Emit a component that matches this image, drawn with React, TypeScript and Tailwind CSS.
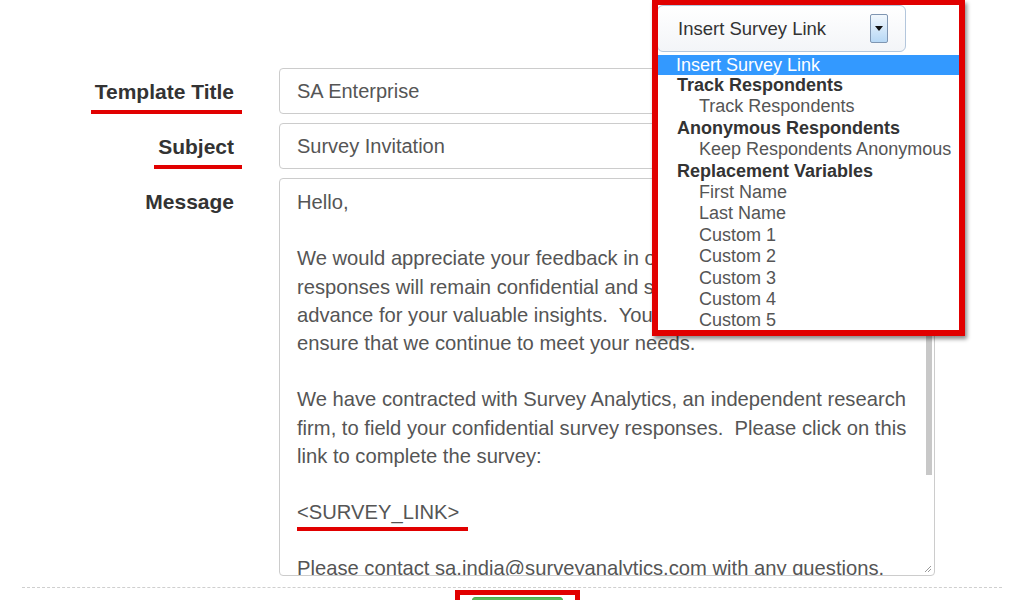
import { ReactNode } from 'react';

const font = { fontFamily: '"Liberation Sans", Arial, sans-serif' };

const messageLines: ReactNode[] = [
  'Hello,',
  '',
  'We would appreciate your feedback in our survey.  Your',
  'responses will remain confidential and secure.  Thank you in',
  'advance for your valuable insights.  Your feedback will help us',
  'ensure that we continue to meet your needs.',
  '',
  'We have contracted with Survey Analytics, an independent research',
  'firm, to field your confidential survey responses.  Please click on this',
  'link to complete the survey:',
  '',
  <span key="link" className="border-b-4 border-[#e10000] pb-[4px] pr-[9px]">{'<SURVEY_LINK>'}</span>,
  '',
  'Please contact sa.india@surveyanalytics.com with any questions.',
];

type Opt = { label: string; kind: 'selected' | 'group' | 'item' };

const options: Opt[] = [
  { label: 'Insert Survey Link', kind: 'selected' },
  { label: 'Track Respondents', kind: 'group' },
  { label: 'Track Respondents', kind: 'item' },
  { label: 'Anonymous Respondents', kind: 'group' },
  { label: 'Keep Respondents Anonymous', kind: 'item' },
  { label: 'Replacement Variables', kind: 'group' },
  { label: 'First Name', kind: 'item' },
  { label: 'Last Name', kind: 'item' },
  { label: 'Custom 1', kind: 'item' },
  { label: 'Custom 2', kind: 'item' },
  { label: 'Custom 3', kind: 'item' },
  { label: 'Custom 4', kind: 'item' },
  { label: 'Custom 5', kind: 'item' },
];

function Label({ children, underline }: { children: ReactNode; underline?: boolean }) {
  return (
    <div className="flex justify-end">
      <span
        className={`text-[21px] font-bold text-[#333] leading-[24px] ${
          underline ? 'border-b-[4px] border-[#e10000] pl-[4px] pr-[8px] -mr-[8px] pb-[3px] mt-[12px]' : 'mt-[12px]'
        }`}
      >
        {children}
      </span>
    </div>
  );
}

function SurveyLinkDropdown() {
  return (
    <div className="absolute left-[652px] top-0 w-[313px] h-[336px] border-[6px] border-t-[5px] border-[#e10000] bg-white overflow-hidden shadow-[2px_3px_4px_rgba(0,0,0,0.45)]">
      <div className="flex items-center justify-between w-[249px] h-[47px] -ml-[1px] border border-[#b3c6dc] rounded-[6px] bg-gradient-to-b from-white to-[#f3f5f8] pl-[20px] pr-[17px]">
        <span className="text-[18.5px] text-[#333]">Insert Survey Link</span>
        <div className="flex items-center justify-center w-[18px] h-[29px] border border-[#7f96b2] rounded-[2px] bg-gradient-to-b from-[#f2f8fd] to-[#b7d8f5]">
          <svg width="8" height="5" viewBox="0 0 8 5">
            <path d="M0 0 L8 0 L4 5 Z" fill="#111" />
          </svg>
        </div>
      </div>
      <ul className="mt-[3px] text-[18px]">
        {options.map((o, i) => (
          <li
            key={i}
            className={
              o.kind === 'selected'
                ? 'bg-[#3399ff] text-white pl-[19px] -ml-[1px] h-[20px] leading-[20px]'
                : o.kind === 'group'
                ? 'font-bold text-[#333] pl-[19px] h-[21.4px] leading-[21.4px]'
                : 'text-[#555] pl-[41px] h-[21.4px] leading-[21.4px]'
            }
          >
            {o.label}
          </li>
        ))}
      </ul>
    </div>
  );
}

export default function App() {
  return (
    <div className="relative w-[1024px] h-[600px] overflow-hidden bg-white" style={font}>
      <div className="pt-[68px] flex flex-col">
        <div className="grid grid-cols-[234px_656px] gap-x-[45px] gap-y-[9px]">
          <Label underline>Template Title</Label>
          <div className="h-[46px] border border-[#ccc] rounded-[4px] px-[17px] flex items-center text-[20px] text-[#555]">
            SA Enterprise
          </div>

          <Label underline>Subject</Label>
          <div className="h-[46px] border border-[#ccc] rounded-[4px] px-[17px] flex items-center text-[20px] text-[#555]">
            Survey Invitation
          </div>

          <Label>Message</Label>
          <div className="relative h-[398px] border border-[#ccc] rounded-[4px] overflow-hidden">
            <div className="px-[17px] pt-[9px] text-[20.2px] leading-[28.2px] text-[#555] whitespace-pre">
              {messageLines.map((line, i) => (
                <div key={i} className="h-[28.2px]">
                  {line}
                </div>
              ))}
            </div>
            <div className="absolute right-[2px] top-[1px] w-[6px] h-[295px] bg-[#c8c8c8]" />
            <svg className="absolute right-[2px] bottom-[2px]" width="8" height="8" viewBox="0 0 8 8">
              <path d="M1 7 L7 1 M4 7 L7 4" stroke="#999" strokeWidth="1" />
            </svg>
          </div>
        </div>

        <div className="mt-[11px] mx-[22px] border-t border-dashed border-[#cfcfcf]" />

        <div className="mt-[2px] ml-[455px] w-[125px] h-[40px] border-[5px] border-[#e10000] px-[12px] pt-[2px]">
          <div className="h-full rounded-t-[3px] bg-[#5cb85c] border border-[#4cae4c]" />
        </div>
      </div>

      <SurveyLinkDropdown />
    </div>
  );
}
